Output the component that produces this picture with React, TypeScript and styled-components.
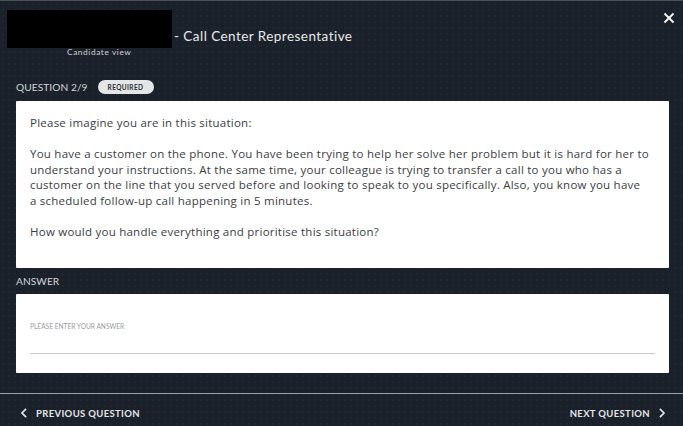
import React from 'react'
import styled, { createGlobalStyle } from 'styled-components'

const GlobalStyle = createGlobalStyle`
  html, body {
    margin: 0;
    padding: 0;
    background: #1b212a;
  }
  * {
    box-sizing: border-box;
  }
`

const Page = styled.div`
  width: 683px;
  height: 426px;
  display: flex;
  flex-direction: column;
  overflow: hidden;
  border-top: 1px solid #4b5058;
  background-color: #1b212a;
  background-image: radial-gradient(rgba(255, 255, 255, 0.045) 0.6px, transparent 0.9px);
  background-size: 6px 6px;
  font-family: 'Open Sans', 'Liberation Sans', sans-serif;
  color: #e4e6e8;
`

const Header = styled.header`
  display: flex;
  align-items: flex-start;
  padding: 9px 8px 0 7px;
  height: 76px;
`

const TitleBlock = styled.div`
  display: flex;
  flex-direction: column;
`

const TitleRow = styled.div`
  display: flex;
  align-items: flex-end;
  gap: 2px;
`

const Redacted = styled.div`
  width: 165px;
  height: 38px;
  background: #000;
`

const Title = styled.h1`
  margin: 0 0 4px;
  font-family: Lato, 'Open Sans', sans-serif;
  font-weight: 400;
  font-size: 13.5px;
  letter-spacing: 0.45px;
  color: #e8e9ea;
`

const SubTitle = styled.span`
  margin: 0 0 0 60px;
  font-family: Lato, sans-serif;
  font-size: 8.3px;
  letter-spacing: 0.6px;
  color: #cfd2d5;
  line-height: 9px;
`

const CloseButton = styled.button`
  margin-left: auto;
  margin-top: 2px;
  padding: 0;
  border: none;
  background: none;
  color: #fff;
  display: flex;
  cursor: pointer;
`

const Main = styled.main`
  display: flex;
  flex-direction: column;
  padding: 0 14px 0 16px;
`

const LabelRow = styled.div`
  display: flex;
  align-items: center;
  gap: 10px;
  height: 20px;
  margin-bottom: 4px;
`

const Label = styled.span`
  font-family: Lato, sans-serif;
  font-size: 10.2px;
  letter-spacing: 0.05px;
  color: #d3d6d9;
  text-transform: uppercase;
`

const Pill = styled.span`
  display: inline-flex;
  align-items: center;
  justify-content: center;
  width: 56px;
  height: 14px;
  border-radius: 7px;
  background: #e4e5e6;
  color: #2a2e33;
  font-family: Lato, sans-serif;
  font-size: 6.5px;
  font-weight: 700;
  letter-spacing: 0.4px;
`

const Card = styled.div<{ $height: number }>`
  background: #fff;
  height: ${({ $height }) => $height}px;
  border-radius: 1px;
  color: #3a3e44;
`

const QuestionCard = styled(Card)`
  padding: 14px 13px 14px 14px;
  font-size: 11.5px;
  letter-spacing: 0.24px;
  line-height: 15.6px;

  p {
    margin: 0 0 15.6px;
  }
`

const AnswerLabelRow = styled(LabelRow)`
  margin-top: 3px;
  margin-bottom: 3px;
`

const AnswerCard = styled(Card)`
  padding: 28px 14px 0;
  display: flex;
  flex-direction: column;
`

const Placeholder = styled.span`
  font-family: Lato, sans-serif;
  font-size: 6.6px;
  color: #9a9da1;
  padding-bottom: 23px;
  border-bottom: 1px solid #c7c9cc;
`

const Footer = styled.footer`
  margin-top: auto;
  height: 33px;
  border-top: 1.5px solid #9ca0a5;
  display: flex;
  align-items: center;
  justify-content: space-between;
  padding: 6px 17px 0 20px;
`

const NavButton = styled.button`
  display: flex;
  align-items: center;
  gap: 8px;
  padding: 0;
  border: none;
  background: none;
  color: #e3e5e7;
  font-family: Lato, sans-serif;
  font-size: 9.5px;
  font-weight: 700;
  letter-spacing: 0.35px;
  cursor: pointer;
`

const Chevron = ({ dir }: { dir: 'left' | 'right' }) => (
  <svg width='8' height='10' viewBox='0 0 8 10' fill='none'>
    <path
      d={dir === 'left' ? 'M5.5 1.5 L2 5 L5.5 8.5' : 'M2.5 1.5 L6 5 L2.5 8.5'}
      stroke='currentColor'
      strokeWidth='1.7'
      strokeLinecap='square'
    />
  </svg>
)

// nbsp keeps "a scheduled" together so the lines wrap like the original
const situation =
  'You have a customer on the phone. You have been trying to help her solve her problem but it is hard for her to understand your instructions. At the same time, your colleague is trying to transfer a call to you who has a customer on the line that you served before and looking to speak to you specifically. Also, you know you have a\u00a0scheduled follow-up call happening in 5 minutes.'

export default function App() {
  return (
    <>
      <GlobalStyle />
      <Page>
        <Header>
          <TitleBlock>
            <TitleRow>
              <Redacted />
              <Title>- Call Center Representative</Title>
            </TitleRow>
            <SubTitle>Candidate view</SubTitle>
          </TitleBlock>
          <CloseButton aria-label='Close'>
            <svg width='12' height='12' viewBox='0 0 12 12'>
              <path d='M1.5 1.5 L10.5 10.5 M10.5 1.5 L1.5 10.5' stroke='currentColor' strokeWidth='1.8' />
            </svg>
          </CloseButton>
        </Header>

        <Main>
          <LabelRow>
            <Label>Question 2/9</Label>
            <Pill>REQUIRED</Pill>
          </LabelRow>
          <QuestionCard $height={167}>
            <p>Please imagine you are in this situation:</p>
            <p>{situation}</p>
            <p>How would you handle everything and prioritise this situation?</p>
          </QuestionCard>

          <AnswerLabelRow>
            <Label>Answer</Label>
          </AnswerLabelRow>
          <AnswerCard $height={79}>
            <Placeholder>PLEASE ENTER YOUR ANSWER</Placeholder>
          </AnswerCard>
        </Main>

        <Footer>
          <NavButton>
            <Chevron dir='left' />
            PREVIOUS QUESTION
          </NavButton>
          <NavButton>
            NEXT QUESTION
            <Chevron dir='right' />
          </NavButton>
        </Footer>
      </Page>
    </>
  )
}
